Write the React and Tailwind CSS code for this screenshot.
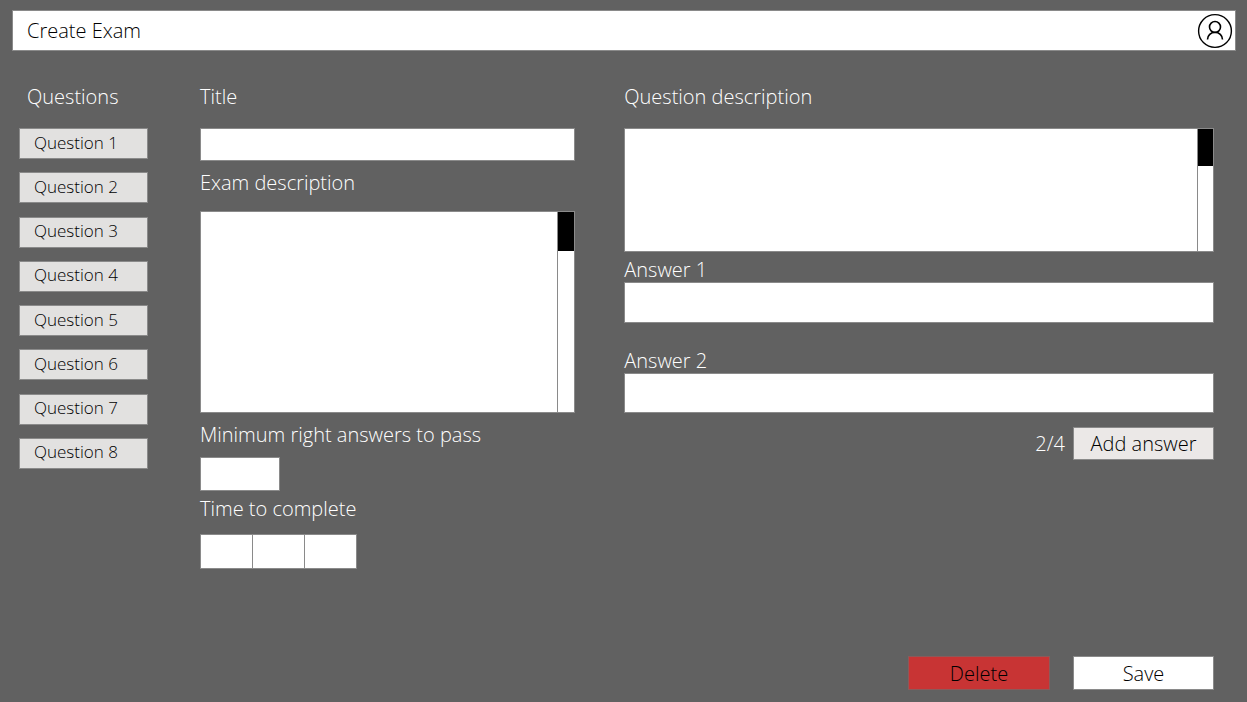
import React from "react";

const questions = [1, 2, 3, 4, 5, 6, 7, 8];
const timeParts = ["Hours", "Minutes", "Seconds"];

function UserIcon() {
  return (
    <svg viewBox="0 0 36 36" className="size-9" fill="none" stroke="#000" aria-hidden="true">
      <circle cx="18" cy="18" r="16.4" strokeWidth="1.4" />
      <circle cx="18" cy="14" r="5.5" strokeWidth="1.6" />
      <path d="M10.5 26.5a7.5 7.2 0 0 1 15 0" strokeWidth="1.6" />
    </svg>
  );
}

function ScrollArea({ id, className, barClassName, thumbClassName }) {
  return (
    <div className={`flex border border-[#8a8a8a] bg-white ${className}`}>
      <textarea id={id} className="min-w-0 flex-1 resize-none overflow-hidden p-2 text-black outline-none" />
      <div className={`border-l border-[#8a8a8a] ${barClassName}`}>
        <div className={`bg-black ${thumbClassName}`} />
      </div>
    </div>
  );
}

function Field({ id, className }) {
  return (
    <input
      id={id}
      type="text"
      className={`border border-[#8a8a8a] bg-white px-2 text-black outline-none ${className}`}
    />
  );
}

export default function App() {
  return (
    <div className="flex min-h-screen flex-col bg-[#616161] pt-[10px] font-['Open_Sans','Noto_Sans',sans-serif] text-[20px] leading-6 font-light text-white">
      <header className="mr-[11px] ml-3 flex h-[41px] items-center justify-between border border-[#8a8a8a] bg-white pr-[2px] pl-[14px] text-black">
        <h1>Create Exam</h1>
        <button type="button" aria-label="Account">
          <UserIcon />
        </button>
      </header>

      <main className="grid grid-cols-[132px_minmax(0,7fr)_minmax(0,11fr)] gap-x-[49px] pt-[34px] pr-[33px] pl-[19px]">
        <nav className="flex flex-col" aria-labelledby="questions-heading">
          <h2 id="questions-heading" className="mb-[19px] pl-2">Questions</h2>
          <ul className="flex h-[341px] flex-col justify-between">
            {questions.map((n) => (
              <li key={n}>
                <button
                  type="button"
                  className="block h-[31px] w-[129px] border border-[#8a8a8a] bg-[#e2e1e0] pb-[2px] pl-[14px] text-left text-[17px] leading-6 text-black"
                >
                  Question {n}
                </button>
              </li>
            ))}
          </ul>
        </nav>

        <section className="flex flex-col items-start">
          <label htmlFor="title" className="mb-[19px]">Title</label>
          <Field id="title" className="h-[33px] w-full" />
          <label htmlFor="exam-description" className="mt-[10px] mb-4">Exam description</label>
          <ScrollArea
            id="exam-description"
            className="h-[202px] w-full"
            barClassName="w-[17px]"
            thumbClassName="h-[39px]"
          />
          <label htmlFor="minimum" className="my-[10px]">Minimum right answers to pass</label>
          <Field id="minimum" className="h-[34px] w-20" />
          <fieldset className="mt-[6px]">
            <legend className="mb-[13px]">Time to complete</legend>
            <div className="flex h-[35px] w-[157px] divide-x divide-[#8a8a8a] border border-[#8a8a8a] bg-white">
              {timeParts.map((part) => (
                <input
                  key={part}
                  type="text"
                  aria-label={part}
                  className="min-w-0 flex-1 px-2 text-black outline-none"
                />
              ))}
            </div>
          </fieldset>
        </section>

        <section className="flex flex-col items-start">
          <label htmlFor="question-description" className="mb-[19px]">Question description</label>
          <ScrollArea
            id="question-description"
            className="h-[124px] w-full"
            barClassName="w-4"
            thumbClassName="h-[37px]"
          />
          <label htmlFor="answer-1" className="mt-[6px]">Answer 1</label>
          <Field id="answer-1" className="h-[41px] w-full" />
          <label htmlFor="answer-2" className="mt-[26px]">Answer 2</label>
          <Field id="answer-2" className="h-10 w-full" />
          <div className="mt-[14px] flex items-center gap-2 self-end">
            <span>2/4</span>
            <button type="button" className="h-[33px] w-[141px] border border-[#8a8a8a] bg-[#ebe8e7] text-black">
              Add answer
            </button>
          </div>
        </section>
      </main>

      <footer className="mt-auto flex justify-end gap-[23px] pt-6 pr-[33px] pb-3 text-black">
        <button type="button" className="h-[34px] w-[142px] border border-[#8a5a5a] bg-[#c83434] pt-[2px]">Delete</button>
        <button type="button" className="h-[34px] w-[141px] border border-[#8a8a8a] bg-white pt-[2px]">Save</button>
      </footer>
    </div>
  );
}
